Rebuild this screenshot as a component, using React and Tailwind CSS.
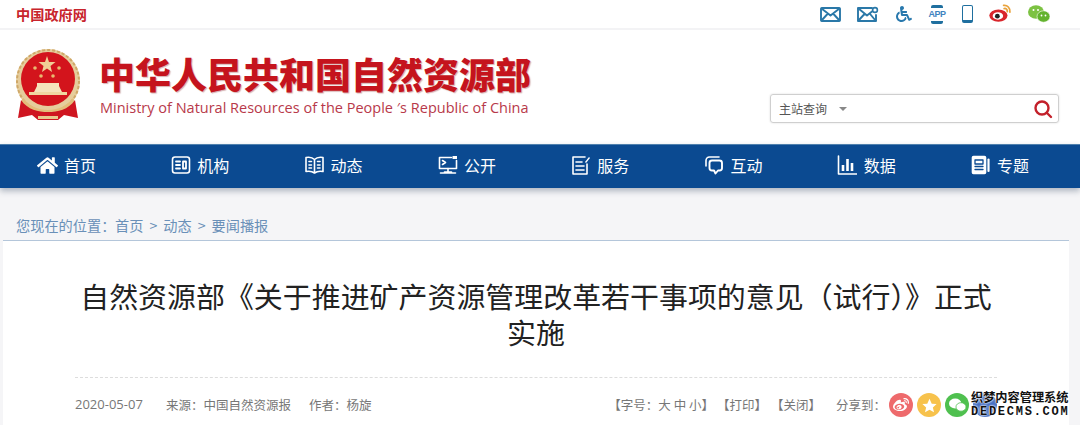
import React from "react";
import { FaWeibo, FaWheelchair, FaHome } from "react-icons/fa";

const cjk = { fontFamily: '"Noto Sans CJK SC","Noto Sans",sans-serif' };

const Stroke = ({ children, w = 20, h = 20, vb = "0 0 20 20", sw = 1.6, className = "" }) => (
  <svg width={w} height={h} viewBox={vb} fill="none" stroke="currentColor" strokeWidth={sw} strokeLinecap="round" strokeLinejoin="round" className={className}>
    {children}
  </svg>
);

const navItems = [
  { t: "首页", i: <FaHome size={21} /> },
  {
    t: "机构",
    i: (
      <Stroke>
        <rect x="1.5" y="2" width="17" height="16" rx="2.5" />
        <path d="M5 6.5h4M5 10h4M5 13.5h4M12 6.5h3v7h-3z" strokeWidth="1.8" />
      </Stroke>
    ),
  },
  {
    t: "动态",
    i: (
      <Stroke w={21}>
        <path d="M10 4.5C8 2.5 4 2 1.5 2.5v14c2.5-.5 6.5 0 8.5 1.5 2-1.5 6-2 8.500-1.500v-14C16 2 12 2.500 10 4.500zM10 4.500V18" />
        <path d="M4.500 6.500h2.500M4.500 10h2.500M4.500 13h2.500M13 6.500h2.500M13 10h2.500M13 13h2.500" />
      </Stroke>
    ),
  },
  {
    t: "公开",
    i: (
      <Stroke w={21}>
        <path d="M14 2.500H2v11h17v-8" />
        <rect x="15" y="1" width="4.500" height="3" fill="currentColor" stroke="none" />
        <path d="M5 5.500l3 2-3 2M10.500 13.500V17M3 18h15M7 17h7" />
      </Stroke>
    ),
  },
  {
    t: "服务",
    i: (
      <Stroke>
        <path d="M14 2H2v17h14V9" />
        <path d="M5 7h6M5 11h8M5 15h8" />
        <path d="M14 7l4-5 1 1-4 5z" fill="currentColor" stroke="none" />
      </Stroke>
    ),
  },
  {
    t: "互动",
    i: (
      <Stroke>
        <path d="M2 11V5.500C2 3.500 3.500 2 5.500 2H15" />
        <path d="M8 5.500h7.500c1.500 0 2.500 1 2.500 2.500v5c0 1.500-1 2.500-2.500 2.500H14L11.500 18.500 10 15.500H8c-1.500 0-2.500-1-2.500-2.500V8C5.500 6.500 6.500 5.500 8 5.500z" strokeWidth="1.9" />
      </Stroke>
    ),
  },
  {
    t: "数据",
    i: (
      <Stroke>
        <path d="M1.500 1v18h18" />
        <path d="M6 10v6M10.500 4v12M15 8v8" strokeWidth="2.600" strokeLinecap="butt" />
      </Stroke>
    ),
  },
  {
    t: "专题",
    i: (
      <Stroke>
        <rect x="1.500" y="1.500" width="13" height="17" rx="1" fill="currentColor" />
        <path d="M4 5h8v4H4zM4 11.500h8M4 14.500h8" stroke="#0b4a91" strokeWidth="1.300" />
        <path d="M17.500 4.500V16" strokeWidth="2.200" />
      </Stroke>
    ),
  },
];

const Emblem = () => (
  <svg width="68" height="74" viewBox="0 0 68 74" className="shrink-0">
    <circle cx="34" cy="33" r="32" fill="#e6cd9c" />
    <circle cx="34" cy="33" r="31" fill="none" stroke="#cfa868" strokeWidth="2" strokeDasharray="3 2" />
    <circle cx="34" cy="31" r="27" fill="#d3141c" />
    <polygon points="33,8 35,14 41.500,14 36.500,18 38,24 33,20.500 28,24 29.500,18 24.500,14 31,14" fill="#f0cf95" />
    <circle cx="21" cy="20" r="1.800" fill="#e9b970" />
    <circle cx="45" cy="20" r="1.800" fill="#e9b970" />
    <circle cx="27" cy="28" r="1.800" fill="#e9b970" />
    <circle cx="39" cy="28" r="1.800" fill="#e9b970" />
    <path d="M23 35h22v3l3 6H20l3-6z" fill="#f5e3bb" />
    <rect x="15" y="44" width="38" height="3" fill="#efd6a0" />
    <path d="M9 50c6 8 15 12 25 12s19-4 25-12l2 4c-6 8-16 12-27 12S13 62 7 54z" fill="#e3bd7a" />
    <path d="M7 52 L4 70 L18 67 L24 72 H44 L50 67 L64 70 L61 52 C54 62 44 64 34 64 S14 62 7 52z" fill="#cf1520" />
    <path d="M24 68h20v3H24z" fill="#e8c98e" />
  </svg>
);

const WeiboIcon = () => (
  <svg width="23" height="18" viewBox="0 0 22 17">
    <ellipse cx="9" cy="11" rx="8.700" ry="5.800" fill="#d9252b" />
    <ellipse cx="8.500" cy="11.300" rx="5" ry="3.600" fill="#fff" />
    <circle cx="8" cy="11.500" r="2.300" fill="#222" />
    <path d="M14 1.200c3.500-.5 6.500 2.500 6 6.500M14.500 4.200c1.800-.3 3.200 1 3 3" stroke="#e9a23b" strokeWidth="1.700" fill="none" strokeLinecap="round" />
  </svg>
);

const WechatIcon = () => (
  <svg width="22" height="18" viewBox="0 0 22 18">
    <ellipse cx="8" cy="7" rx="8" ry="6.800" fill="#7cc242" />
    <ellipse cx="15.500" cy="11.500" rx="6.500" ry="5.700" fill="#63b32e" stroke="#fff" strokeWidth=".6" />
    <circle cx="5.500" cy="5" r="1" fill="#fff" />
    <circle cx="10" cy="5" r="1" fill="#fff" />
    <circle cx="13.500" cy="10.500" r=".9" fill="#fff" />
    <circle cx="17.500" cy="10.500" r=".9" fill="#fff" />
  </svg>
);

const Topbar = () => (
  <div className="h-[30px] flex items-center justify-between border-b-2 border-[#f3f3f5] pl-[16px] pr-[30px]">
    <span className="text-[14.200px] font-bold text-[#c8242c] leading-none">中国政府网</span>
    <div className="flex items-center text-[#2a78a8]">
      <Stroke w={21} h={15} vb="0 0 21 15" sw={1.900} className="mr-[16px]">
        <rect x="1" y="1" width="19" height="13" rx="1" />
        <path d="M1.500 1.500l9 7 9-7M1.500 13.500l6-6.500M19.500 13.500l-6-6.500" />
      </Stroke>
      <Stroke w={22} h={16} vb="0 0 22 16" sw={1.900} className="mr-[17px]">
        <path d="M15 2H1v13h18V9" />
        <path d="M1.500 2.500l8.500 7 5-4M1.500 14.500l6-6.500M18.500 14.500l-5-6" />
        <circle cx="18" cy="4" r="2.400" strokeWidth="1.600" />
      </Stroke>
      <FaWheelchair size={16} className="mr-[17px] text-[#2878ad]" />
      <div className="mr-[17px] flex h-[19px] w-[16px] flex-col items-center justify-between text-[#3f83c0]">
        <span className="h-[3px] w-[12px] rounded-t-[2px] bg-[#1f6f9f]" />
        <span className="text-[9px] font-bold leading-none tracking-[-0.5px]" style={{ fontFamily: '"Liberation Sans",sans-serif' }}>APP</span>
        <span className="h-[3px] w-[12px] rounded-b-[2px] bg-[#1f6f9f]" />
      </div>
      <div className="mr-[16px] h-[18px] w-[11px] rounded-[2px] border-x-[1.500px] border-t-[1.500px] border-b-[3px] border-[#1f6f9f]" />
      <div className="mr-[16px] mt-[-2px]"><WeiboIcon /></div>
      <WechatIcon />
    </div>
  </div>
);

const Header = () => (
  <div className="h-[114px] flex bg-white pl-[14px] pr-[21px]">
    <div className="mt-[18px] mr-[17px]"><Emblem /></div>
    <div className="mt-[23px] flex flex-col">
      <h1 className="text-[36px] leading-[40px] font-black text-[#c5141d] whitespace-nowrap [text-shadow:1px_1px_1px_rgba(120,0,0,0.3)]">中华人民共和国自然资源部</h1>
      <p className="mt-[5px] ml-[1px] text-[14.500px] leading-[20px] text-[#b8394a] whitespace-nowrap" style={{ fontFamily: '"Open Sans","Noto Sans",sans-serif' }}>Ministry of Natural Resources of the People ′s Republic of China</p>
    </div>
    <div className="ml-auto mt-[64px] flex h-[29px] w-[289px] items-center rounded-[3px] border border-[#cfcfcf] pl-[8px] pr-[5px] shadow-[0_0_2px_rgba(0,0,0,0.15)]">
      <span className="text-[12px] text-[#555]">主站查询</span>
      <span className="ml-[12px] h-0 w-0 border-x-[4px] border-t-[4px] border-x-transparent border-t-[#888]" />
      <svg width="20" height="20" viewBox="0 0 20 20" className="ml-auto" fill="none" stroke="#c3202b" strokeWidth="2.400" strokeLinecap="round">
        <circle cx="9" cy="9" r="6.500" />
        <path d="M14 14l4 4" />
      </svg>
    </div>
  </div>
);

const Nav = () => (
  <nav className="relative z-10 flex h-[44px] items-center bg-[#0b4a91] pb-[3px] pl-[37px] shadow-[0_3px_6px_rgba(40,60,90,0.35)] border-t border-[#4f80ad]">
    {navItems.map((n) => (
      <div key={n.t} className="flex w-[133.300px] shrink-0 items-center gap-[6px] text-white">
        <span className="flex h-[21px] w-[21px] items-center justify-center">{n.i}</span>
        <span className="text-[16px] leading-none">{n.t}</span>
      </div>
    ))}
  </nav>
);

const Chip = ({ bg, children }) => (
  <span className={`flex h-[24px] w-[24px] items-center justify-center rounded-full ${bg}`}>{children}</span>
);

const Main = () => (
  <div className="bg-[#f5f5f7] h-[237px] overflow-hidden">
    <div className="h-[52px] flex items-end whitespace-nowrap pl-[16px] pb-[5px] text-[14.200px] leading-[20px] text-[#6a90b8]">
      <span className="w-[99px] shrink-0">您现在的位置：</span>
      <span className="flex gap-[6px]">
        <span>首页</span><span>&gt;</span><span>动态</span><span>&gt;</span><span>要闻播报</span>
      </span>
    </div>
    <div className="ml-[3px] w-[1066px] h-[185px] border-t border-[#b4c6da] bg-white px-[72px]">
      <h2 className="mt-[36px] whitespace-nowrap text-center text-[28.950px] leading-[36px] text-[#222]">
        自然资源部《关于推进矿产资源管理改革若干事项的意见（试行）》正式<br />实施
      </h2>
      <div className="mt-[28px] border-t border-dashed border-[#ddd]" />
      <div className="mt-[15px] flex items-center text-[12.500px] text-[#777]">
        <span className="w-[91px] text-[13px]" style={{ fontFamily: '"Open Sans",sans-serif' }}>2020-05-07</span>
        <span className="w-[143px]">来源：中国自然资源报</span>
        <span>作者：杨旋</span>
        <span className="ml-auto flex items-center">
          <span className="mr-[3px]">【字号：大 中 小】</span>
          <span className="mr-[4px]">【打印】</span>
          <span className="mr-[15px]">【关闭】</span>
          <span className="mr-[3px]">分享到：</span>
          <span className="flex gap-[4px]">
            <Chip bg="bg-[#ee6a6c]"><FaWeibo size={16} color="#fff" /></Chip>
            <Chip bg="bg-[#f7c24c]"><svg width="15" height="15" viewBox="0 0 20 20"><polygon points="10,1 13,7.500 19.500,8 14.500,12.500 16,19 10,15.500 4,19 5.500,12.500 .5,8 7,7.500" fill="#fff" /></svg></Chip>
            <Chip bg="bg-[#4fc04f]"><svg width="17" height="14" viewBox="0 0 22 18"><ellipse cx="8" cy="7" rx="8" ry="6.500" fill="#fff" /><ellipse cx="15.500" cy="11.500" rx="6.500" ry="5.500" fill="#fff" stroke="#4fc04f" /></svg></Chip>
            <Chip bg="bg-[#4a72c4]" />
          </span>
        </span>
      </div>
    </div>
  </div>
);

export default function App() {
  return (
    <div className="relative h-[425px] w-[1080px] overflow-hidden bg-white" style={cjk}>
      <Topbar />
      <Header />
      <Nav />
      <Main />
      <div className="absolute left-[971px] top-[390px] w-[98px] text-[#111] [text-shadow:0_0_1px_#fff,0_0_2px_#fff,0_0_2px_#fff]">
        <div className="text-[12.200px] font-bold leading-[15px] whitespace-nowrap">织梦内容管理系统</div>
        <div className="mt-[1px] text-[12px] font-bold leading-[12px] tracking-[1.750px] whitespace-nowrap" style={{ fontFamily: '"Liberation Mono",monospace' }}>DEDECMS.COM</div>
      </div>
    </div>
  );
}
